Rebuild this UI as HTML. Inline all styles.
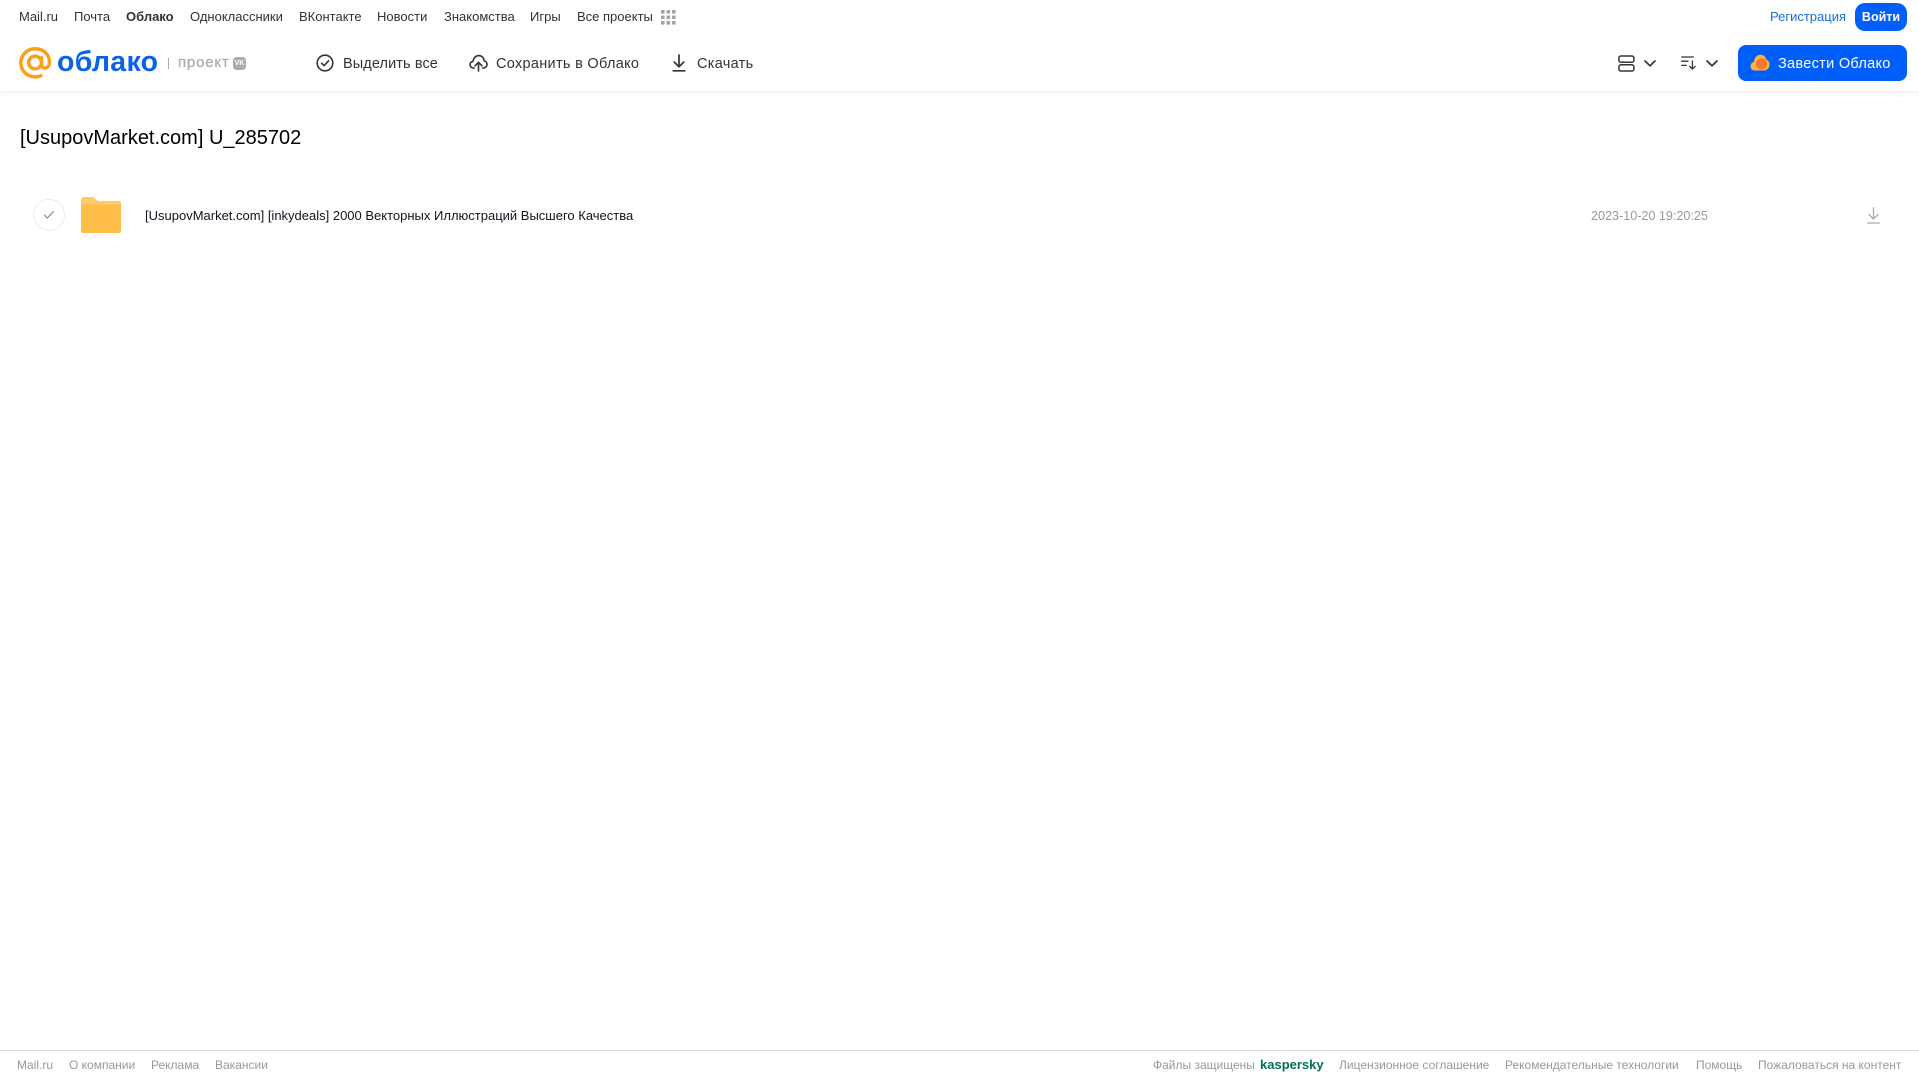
<!DOCTYPE html>
<html lang="ru"><head><meta charset="utf-8"><title>Облако</title>
<style>
html,body{margin:0;padding:0;background:#fff}
body{width:1919px;height:1079px;position:relative;overflow:hidden;font-family:"Liberation Sans",Arial,sans-serif;color:#333}
.t{position:absolute;white-space:nowrap;line-height:20px}
.n{top:7px;font-size:13px;color:#333}
.a{top:53.500px;font-size:14.500px;color:#333;letter-spacing:.3px}
.f{top:1055px;font-size:12px;color:#999}
svg{position:absolute;overflow:visible}
#hdr{position:absolute;left:0;top:0;width:1919px;height:91px;background:#fff;box-shadow:0 1px 6px rgba(0,0,0,.08)}
</style></head><body>
<div id="hdr"></div>
<span class="t n" style="left:19px">Mail.ru</span>
<span class="t n" style="left:74px">Почта</span>
<span class="t n" style="left:126px;font-weight:700">Облако</span>
<span class="t n" style="left:190px">Одноклассники</span>
<span class="t n" style="left:299px">ВКонтакте</span>
<span class="t n" style="left:377px">Новости</span>
<span class="t n" style="left:444px">Знакомства</span>
<span class="t n" style="left:530px">Игры</span>
<span class="t n" style="left:577px">Все проекты</span>
<svg style="left:661px;top:10px" width="15" height="15" fill="#a3a3a3"><rect x="0" y="0" width="3.600" height="3.600" rx=".8"/><rect x="5.500" y="0" width="3.600" height="3.600" rx=".8"/><rect x="11" y="0" width="3.600" height="3.600" rx=".8"/><rect x="0" y="5.500" width="3.600" height="3.600" rx=".8"/><rect x="5.500" y="5.500" width="3.600" height="3.600" rx=".8"/><rect x="11" y="5.500" width="3.600" height="3.600" rx=".8"/><rect x="0" y="11" width="3.600" height="3.600" rx=".8"/><rect x="5.500" y="11" width="3.600" height="3.600" rx=".8"/><rect x="11" y="11" width="3.600" height="3.600" rx=".8"/></svg>
<span class="t n" style="left:1770px;color:#1a6fe0">Регистрация</span>
<div style="position:absolute;left:1855px;top:3px;width:52px;height:28px;border-radius:10px;background:#005ff9"></div>
<span class="t n" style="left:1855px;width:52px;text-align:center;color:#fff;font-weight:700;font-size:12.500px">Войти</span>

<svg style="left:19px;top:47px" width="33" height="32" viewBox="0 0 34 33" fill="none" stroke="#f9a11b" stroke-width="3.600"><circle cx="16.500" cy="16" r="6.600"/><path d="M23.200 9.500v8.200c0 2.600 1.600 4 3.600 4 2.400 0 4.600-2 4.600-6.200C31.400 7.600 25 1.800 16.600 1.800 8.400 1.800 1.900 8.200 1.900 16.200c0 8.200 6.400 14.600 14.800 14.600 2.800 0 5-.6 7.200-1.800"/></svg>
<span class="t" style="left:57px;top:46px;line-height:32px;font-size:28.500px;font-weight:700;color:#0b62e6;letter-spacing:.3px">облако</span>
<div style="position:absolute;left:168px;top:58px;width:1px;height:11px;background:#aaa"></div>
<span class="t" style="left:178px;top:53px;font-size:15px;color:#adadad;letter-spacing:.8px;-webkit-text-stroke:.3px #adadad">проект</span>
<div style="position:absolute;left:233px;top:57px;width:13px;height:13px;border-radius:3.500px;background:#adadad"></div>
<span class="t" style="left:233px;top:57px;width:13px;line-height:13px;text-align:center;font-size:7px;font-weight:700;color:#fff">VK</span>

<svg style="left:316px;top:54px" width="18" height="18" viewBox="0 0 18 18" fill="none" stroke="#333" stroke-width="1.600"><circle cx="9" cy="9" r="7.800"/><path d="M5.600 9.200l2.500 2.500 4.400-4.800" stroke-linecap="round" stroke-linejoin="round"/></svg>
<span class="t a" style="left:343px;letter-spacing:.1px">Выделить все</span>
<svg style="left:469px;top:54px" width="19" height="18" viewBox="0 0 19 18" fill="none" stroke="#333" stroke-width="1.600" stroke-linecap="round" stroke-linejoin="round"><path d="M5.200 14H4.400C2.400 14 1 12.400 1 10.600c0-1.800 1.300-3 3-3.200C4.500 4 6.800 1.600 9.800 1.600c3 0 5.200 2.400 5.500 5.400 1.600.3 2.700 1.700 2.700 3.400 0 2-1.500 3.600-3.500 3.600h-.8"/><path d="M9.500 17V8.500M6 11.800l3.500-3.500 3.500 3.500"/></svg>
<span class="t a" style="left:496px">Сохранить в Облако</span>
<svg style="left:672px;top:54px" width="14" height="18" viewBox="0 0 14 18" fill="none" stroke="#333" stroke-width="1.700" stroke-linecap="round" stroke-linejoin="round"><path d="M7 1v11.500M2.200 8L7 12.800 11.800 8M1.200 16.800h11.600"/></svg>
<span class="t a" style="left:697px">Скачать</span>

<svg style="left:1618px;top:55px" width="17" height="17" viewBox="0 0 17 17" fill="none" stroke="#333" stroke-width="1.500"><rect x=".9" y="1" width="15" height="6.200" rx="2"/><rect x=".9" y="9.800" width="15" height="6.200" rx="2"/></svg>
<svg style="left:1644px;top:60px" width="12" height="7" viewBox="0 0 12 7" fill="none" stroke="#333" stroke-width="1.700" stroke-linecap="round" stroke-linejoin="round"><path d="M1 1l5 4.800L11 1"/></svg>
<svg style="left:1681px;top:56px" width="16" height="14" viewBox="0 0 16 14" fill="none" stroke="#333" stroke-width="1.300" stroke-linecap="round" stroke-linejoin="round"><path d="M.7 1h11.600M.7 5.200h6.300M.7 9.400h4.500M11.400 5v8M8.600 10.300l2.800 2.800 2.800-2.800"/></svg>
<svg style="left:1706px;top:60px" width="12" height="7" viewBox="0 0 12 7" fill="none" stroke="#333" stroke-width="1.700" stroke-linecap="round" stroke-linejoin="round"><path d="M1 1l5 4.800L11 1"/></svg>
<div style="position:absolute;left:1738px;top:45px;width:169px;height:36px;border-radius:8px;background:#005ff9"></div>
<svg style="left:1750px;top:54px" width="20" height="17" viewBox="0 0 20 17"><path d="M5 16.500C2.200 16.500.5 14.700.5 12.300c0-2.200 1.500-3.900 3.400-4.300C4.300 3.600 7.100.8 10.300.8c3 0 5.200 1.900 6 4.600 1.900.8 3.200 2.900 3.200 5.200 0 3.300-2.400 5.900-5.600 5.900z" fill="#ffb23e"/><circle cx="11.500" cy="9.800" r="5.600" fill="#f5792a"/></svg>
<span class="t a" style="left:1778px;color:#fff">Завести Облако</span>

<span class="t" style="left:20px;top:123px;line-height:30px;font-size:20px;color:#000">[UsupovMarket.com] U_285702</span>

<div style="position:absolute;left:33px;top:199px;width:30px;height:30px;border:1px solid #ececec;border-radius:50%"></div>
<svg style="left:43px;top:210px" width="12" height="10" viewBox="0 0 12 10" fill="none" stroke="#8c8c8c" stroke-width="1.200" stroke-linecap="round" stroke-linejoin="round"><path d="M1.500 5.200l2.800 2.800 6-6.300"/></svg>
<svg style="left:81px;top:197px" width="40" height="36" viewBox="0 0 40 36"><path d="M2.500 0h8.500c1.500 0 2.500.6 3.400 1.700L16.500 4H38a2 2 0 0 1 2 2v28a2 2 0 0 1-2 2H2a2 2 0 0 1-2-2V2.500A2.500 2.500 0 0 1 2.500 0z" fill="#ffcb66"/><path d="M0 9.500a2 2 0 0 1 2-2h36a2 2 0 0 1 2 2V34a2 2 0 0 1-2 2H2a2 2 0 0 1-2-2z" fill="#ffbe47"/></svg>
<span class="t" style="left:145px;top:206px;font-size:13px;color:#1a1020">[UsupovMarket.com] [inkydeals] 2000 Векторных Иллюстраций Высшего Качества</span>
<span class="t" style="left:1591px;top:206px;font-size:12.600px;color:#999">2023-10-20 19:20:25</span>
<svg style="left:1867px;top:207px" width="13" height="17" viewBox="0 0 13 17" fill="none" stroke="#aaa" stroke-width="1.300" stroke-linecap="round" stroke-linejoin="round"><path d="M6.500 .8v11M2 7.500l4.500 4.500L11 7.500M.7 16h11.600"/></svg>

<div style="position:absolute;left:0;top:1050px;width:1919px;height:1px;background:#ddd"></div>
<span class="t f" style="left:17px">Mail.ru</span>
<span class="t f" style="left:69px">О компании</span>
<span class="t f" style="left:151px">Реклама</span>
<span class="t f" style="left:215px">Вакансии</span>
<span class="t f" style="left:1153px">Файлы защищены</span>
<span class="t f" style="left:1260px;color:#00725b;font-weight:700;font-size:13px">kaspersky</span>
<span class="t f" style="left:1339px">Лицензионное соглашение</span>
<span class="t f" style="left:1505px">Рекомендательные технологии</span>
<span class="t f" style="left:1696px">Помощь</span>
<span class="t f" style="left:1758px">Пожаловаться на контент</span>
</body></html>
